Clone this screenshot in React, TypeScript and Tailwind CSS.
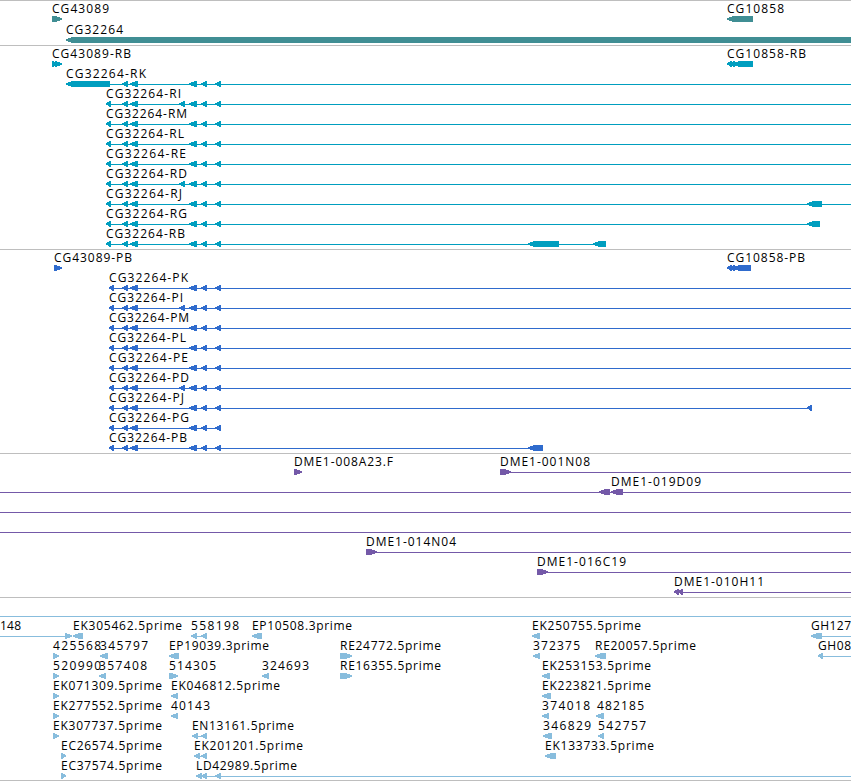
type Dir = "left" | "right";
type Label = [text: string, start: number, end: number];
type Exon = [start: number, end: number, dir?: Dir];

interface Row {
  labels?: Label[];
  lines?: [number, number][];
  exons?: Exon[];
}

interface TrackProps {
  rows: Row[];
  color: string;
  className: string;
  rowClassName?: string;
}

const VIEW_END = 851;

// exons shared by every CG32264 isoform
const SHARED: Exon[] = [
  [122, 128],
  [130, 138],
  [189, 197],
  [201, 207],
  [215, 221],
];
const EXTRA: Exon = [179, 185];

const isoform = (
  name: string,
  labelEnd: number,
  start: number,
  extra: Exon[] = [],
  lineEnd = VIEW_END
): Row => ({
  labels: [[name, start, labelEnd]],
  lines: [[start + 3, lineEnd]],
  exons: [[start, start + 5], ...SHARED, ...extra],
});

const genes: Row[] = [
  {
    labels: [["CG43089", 52, 109], ["CG10858", 727, 784]],
    exons: [[52, 62, "right"], [727, 753]],
  },
  { labels: [["CG32264", 66, 123]], exons: [[66, 860]] },
];

const transcripts: Row[] = [
  {
    labels: [["CG43089-RB", 52, 131], ["CG10858-RB", 727, 806]],
    exons: [[52, 57, "right"], [55, 62, "right"], [727, 732], [730, 735], [733, 753]],
  },
  {
    labels: [["CG32264-RK", 66, 146]],
    lines: [[110, VIEW_END]],
    exons: [[66, 110], ...SHARED],
  },
  isoform("CG32264-RI", 181, 106, [EXTRA]),
  isoform("CG32264-RM", 187, 106),
  isoform("CG32264-RL", 184, 106),
  isoform("CG32264-RE", 186, 106),
  isoform("CG32264-RD", 187, 106, [EXTRA]),
  isoform("CG32264-RJ", 182, 106, [[807, 822]]),
  isoform("CG32264-RG", 187, 106, [[807, 820]], 810),
  isoform("CG32264-RB", 185, 106, [[528, 559], [593, 606]], 600),
];

const proteins: Row[] = [
  {
    labels: [["CG43089-PB", 54, 132], ["CG10858-PB", 727, 805]],
    exons: [[54, 62, "right"], [727, 732], [730, 735], [733, 751]],
  },
  isoform("CG32264-PK", 188, 109),
  isoform("CG32264-PI", 183, 109, [EXTRA]),
  isoform("CG32264-PM", 189, 109),
  isoform("CG32264-PL", 186, 109),
  isoform("CG32264-PE", 188, 109),
  isoform("CG32264-PD", 189, 109, [EXTRA]),
  isoform("CG32264-PJ", 184, 109, [[807, 812]], 810),
  isoform("CG32264-PG", 189, 109, [], 219),
  isoform("CG32264-PB", 187, 109, [[528, 543]], 530),
];

const bacs: Row[] = [
  {
    labels: [["DME1-008A23.F", 294, 393], ["DME1-001N08", 500, 590]],
    lines: [[508, VIEW_END]],
    exons: [[294, 302, "right"], [500, 511, "right"]],
  },
  {
    labels: [["DME1-019D09", 611, 701]],
    lines: [[0, VIEW_END]],
    exons: [[599, 610], [611, 623]],
  },
  { lines: [[0, VIEW_END]] },
  { lines: [[0, VIEW_END]] },
  {
    labels: [["DME1-014N04", 366, 456]],
    lines: [[372, VIEW_END]],
    exons: [[366, 377, "right"]],
  },
  {
    labels: [["DME1-016C19", 537, 626]],
    lines: [[543, VIEW_END]],
    exons: [[537, 548, "right"]],
  },
  {
    labels: [["DME1-010H11", 674, 764]],
    lines: [[676, VIEW_END]],
    exons: [[674, 679], [678, 683]],
  },
];

const ests: Row[] = [
  { lines: [[0, VIEW_END]] },
  {
    labels: [
      ["148", 0, 21],
      ["EK305462.5prime", 73, 182],
      ["558198", 191, 239],
      ["EP10508.3prime", 252, 352],
      ["EK250755.5prime", 532, 641],
      ["GH127", 811, 851],
    ],
    lines: [[0, 68], [194, 204], [820, VIEW_END]],
    exons: [[65, 72, "right"], [73, 83], [191, 197], [201, 207], [252, 262], [532, 540], [811, 822]],
  },
  {
    labels: [
      ["425568", 53, 101],
      ["345797", 100, 148],
      ["EP19039.3prime", 169, 269],
      ["RE24772.5prime", 340, 441],
      ["372375", 533, 580],
      ["RE20057.5prime", 595, 696],
      ["GH08", 818, 851],
    ],
    lines: [[820, VIEW_END]],
    exons: [[53, 59, "right"], [100, 108], [169, 179], [340, 352, "right"], [533, 540], [595, 606], [818, 823]],
  },
  {
    labels: [
      ["520990", 53, 101],
      ["357408", 99, 147],
      ["514305", 169, 216],
      ["324693", 262, 309],
      ["RE16355.5prime", 340, 441],
      ["EK253153.5prime", 542, 651],
    ],
    exons: [[53, 59, "right"], [99, 106], [169, 178, "right"], [262, 269], [340, 352, "right"], [542, 550]],
  },
  {
    labels: [
      ["EK071309.5prime", 53, 162],
      ["EK046812.5prime", 171, 280],
      ["EK223821.5prime", 542, 651],
    ],
    exons: [[53, 59, "right"], [171, 178], [542, 551]],
  },
  {
    labels: [
      ["EK277552.5prime", 53, 162],
      ["40143", 171, 210],
      ["374018", 542, 590],
      ["482185", 597, 644],
    ],
    exons: [[53, 59, "right"], [171, 178], [542, 549], [596, 604]],
  },
  {
    labels: [
      ["EK307737.5prime", 53, 162],
      ["EN13161.5prime", 192, 294],
      ["346829", 543, 591],
      ["542757", 598, 646],
    ],
    lines: [[194, 204]],
    exons: [[53, 59, "right"], [192, 198], [201, 207], [543, 552], [598, 604]],
  },
  {
    labels: [
      ["EC26574.5prime", 61, 162],
      ["EK201201.5prime", 194, 303],
      ["EK133733.5prime", 545, 654],
    ],
    lines: [[196, 204]],
    exons: [[61, 66, "right"], [194, 200], [201, 207], [545, 556]],
  },
  {
    labels: [["EC37574.5prime", 61, 162], ["LD42989.5prime", 196, 297]],
    lines: [[198, VIEW_END]],
    exons: [[61, 66, "right"], [196, 202], [201, 207], [215, 221]],
  },
];

function exonPoints([start, end, dir = "left"]: Exon) {
  const head = Math.min(6, end - start - 1);
  if (dir === "left") {
    return `${start},17.4 ${start + head},15 ${end},15 ${end},21 ${start + head},21 ${start},18.6`;
  }
  return `${end},17.4 ${end - head},15 ${start},15 ${start},21 ${end - head},21 ${end},18.6`;
}

function TrackRow({ row, color, className }: { row: Row; color: string; className: string }) {
  return (
    <svg width={VIEW_END} className={`block overflow-visible ${className}`}>
      <g fill={color} shapeRendering="crispEdges">
        {row.lines?.map(([start, end]) => (
          <rect key={start} x={start} y={18} width={end - start} height={1} />
        ))}
        {row.exons?.map((exon) => (
          <polygon key={exon[0]} points={exonPoints(exon)} />
        ))}
      </g>
      {row.labels?.map(([text, start, end]) => (
        <text key={text} x={start} y={12} textLength={end - start} className="fill-black text-[12px]">
          {text}
        </text>
      ))}
    </svg>
  );
}

function Track({ rows, color, className, rowClassName = "h-5" }: TrackProps) {
  return (
    <section className={`shrink-0 border-t border-[#bebebe] ${className}`}>
      {rows.map((row, i) => (
        <TrackRow key={i} row={row} color={color} className={rowClassName} />
      ))}
    </section>
  );
}

export default function App() {
  return (
    <main className="flex h-[781px] w-[851px] flex-col overflow-hidden border-b border-[#bebebe] bg-white font-['Open_Sans','Noto_Sans',sans-serif]">
      <Track rows={genes} color="#408e94" className="h-[45px]" rowClassName="h-[21px]" />
      <Track rows={transcripts} color="#009ebf" className="h-[204px]" />
      <Track rows={proteins} color="#2f6bcd" className="h-[204px]" />
      <Track rows={bacs} color="#7459a8" className="h-[144px]" />
      <Track rows={ests} color="#88bddd" className="h-[183px]" />
    </main>
  );
}
